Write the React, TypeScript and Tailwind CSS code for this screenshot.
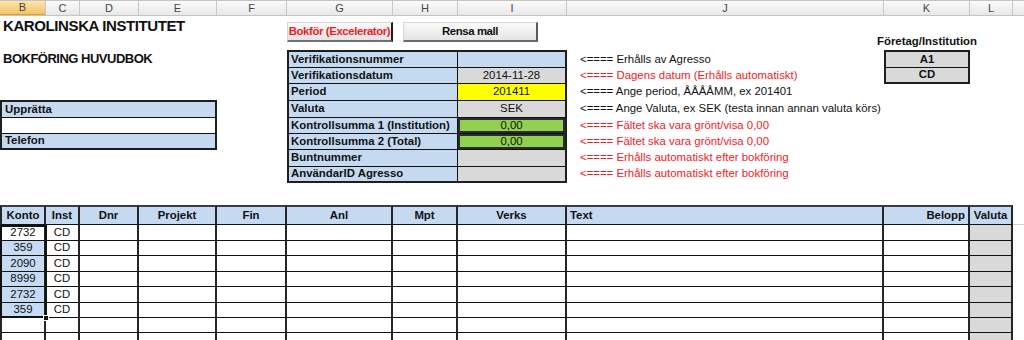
const sheetCols = [
  { letter: "B", w: "w-[46px]", active: true },
  { letter: "C", w: "w-[34px]" },
  { letter: "D", w: "w-[59px]" },
  { letter: "E", w: "w-[78px]" },
  { letter: "F", w: "w-[70px]" },
  { letter: "G", w: "w-[106px]" },
  { letter: "H", w: "w-[65px]" },
  { letter: "I", w: "w-[109px]" },
  { letter: "J", w: "w-[317px]" },
  { letter: "K", w: "w-[86px]" },
  { letter: "L", w: "w-[43px]" },
];

const formRows = [
  { label: "Verifikationsnummer", value: "", fill: "bg-[#c5d9f1]", h: "h-[16px]", note: "<==== Erhålls av Agresso", red: false },
  { label: "Verifikationsdatum", value: "2014-11-28", fill: "bg-[#d9d9d9]", h: "h-[16px]", note: "<==== Dagens datum (Erhålls automatiskt)", red: true },
  { label: "Period", value: "201411", fill: "bg-[#ffff00]", h: "h-[17px]", note: "<==== Ange period, ÅÅÅÅMM, ex 201401", red: false },
  { label: "Valuta", value: "SEK", fill: "bg-[#d9d9d9]", h: "h-[17px]", note: "<==== Ange Valuta, ex SEK (testa innan annan valuta körs)", red: false },
  { label: "Kontrollsumma 1 (Institution)", value: "0,00", fill: "bg-[#92d050] border-2 border-[#2b2b2b]", h: "h-[16px]", note: "<==== Fältet ska vara grönt/visa 0,00", red: true },
  { label: "Kontrollsumma 2 (Total)", value: "0,00", fill: "bg-[#92d050] border-2 border-[#2b2b2b]", h: "h-[16px]", note: "<==== Fältet ska vara grönt/visa 0,00", red: true },
  { label: "Buntnummer", value: "", fill: "bg-[#d9d9d9]", h: "h-[17px]", note: "<==== Erhålls automatiskt efter bokföring", red: true },
  { label: "AnvändarID Agresso", value: "", fill: "bg-[#d9d9d9]", h: "h-[14px]", note: "<==== Erhålls automatiskt efter bokföring", red: true },
];

const tableCols = [
  { name: "Konto", w: "w-[46px] border-l-2", align: "justify-center" },
  { name: "Inst", w: "w-[34px]", align: "justify-center" },
  { name: "Dnr", w: "w-[59px]", align: "justify-center" },
  { name: "Projekt", w: "w-[78px]", align: "justify-center" },
  { name: "Fin", w: "w-[70px]", align: "justify-center" },
  { name: "Anl", w: "w-[106px]", align: "justify-center" },
  { name: "Mpt", w: "w-[65px]", align: "justify-center" },
  { name: "Verks", w: "w-[109px]", align: "justify-center" },
  { name: "Text", w: "w-[317px]", align: "justify-start pl-[3px]" },
  { name: "Belopp", w: "w-[86px]", align: "justify-end pr-[3px]" },
  { name: "Valuta", w: "w-[43px]", align: "justify-center" },
];

const rows = [
  { h: "h-[16px]", konto: "2732", inst: "CD", sel: false },
  { h: "h-[15px]", konto: "359", inst: "CD", sel: true },
  { h: "h-[16px]", konto: "2090", inst: "CD", sel: true },
  { h: "h-[15px]", konto: "8999", inst: "CD", sel: true },
  { h: "h-[16px]", konto: "2732", inst: "CD", sel: true },
  { h: "h-[15px]", konto: "359", inst: "CD", sel: true },
  { h: "h-[15px]", konto: "", inst: "", sel: false },
  { h: "h-[16px]", konto: "", inst: "", sel: false },
  { h: "h-[16px]", konto: "", inst: "", sel: false },
];

const App = () => {
  return (
    <div className="w-[1024px] h-[340px] overflow-hidden bg-white text-[#111] font-['Liberation_Sans',Arial,sans-serif]">
      {/* column letters */}
      <div className="flex h-[16px] border-t border-b border-[#c4c4c4] bg-linear-to-b from-[#fbfbfb] to-[#e8e8e8]">
        {sheetCols.map((c) => (
          <div
            key={c.letter}
            className={`${c.w} flex items-center justify-center border-r border-[#c9c9c9] text-[11px] text-[#454545] ${
              c.active ? "bg-linear-to-b from-[#fde4ae] to-[#f3c462] border-b border-b-[#e39a2e]" : ""
            }`}
          >
            {c.letter}
          </div>
        ))}
        <div className="flex-1" />
      </div>

      {/* top part */}
      <div className="flex h-[189px]">
        <div className="w-[287px] flex flex-col">
          <div className="h-[19px] pl-[3px] text-[15px] leading-[19px] font-bold tracking-[-0.4px] whitespace-nowrap">
            KAROLINSKA INSTITUTET
          </div>
          <div className="mt-[16px] h-[16px] pl-[3px] text-[13px] leading-[16px] font-bold tracking-[-0.5px] whitespace-nowrap">
            BOKFÖRING HUVUDBOK
          </div>
          <div className="mt-[33px] w-[217px] border-2 border-[#1e1e1e] text-[11.4px] font-bold">
            <div className="h-[16px] flex items-center pl-[3px] bg-[#c5d9f1] border-b border-[#111]">Upprätta</div>
            <div className="h-[16px] border-b border-[#111]" />
            <div className="h-[14px] flex items-center pl-[3px] bg-[#c5d9f1]">Telefon</div>
          </div>
        </div>

        <div className="w-[280px] flex flex-col">
          <div className="mt-[6px] h-[20px] flex text-[11.4px] font-bold tracking-[-0.4px]">
            <div className="w-[106px] flex items-center justify-center bg-linear-to-b from-[#fafafa] to-[#e4e4e4] border-t border-l border-[#d6d6d6] border-r-2 border-r-[#1c1c1c] border-b-2 border-b-[#707070] text-[#ee1c25] whitespace-nowrap">
              Bokför (Excelerator)
            </div>
            <div className="ml-[10px] w-[135px] flex items-center justify-center bg-linear-to-b from-[#fafafa] to-[#e4e4e4] border-t border-l border-[#d6d6d6] border-r-2 border-r-[#5a5a5a] border-b-2 border-b-[#6a6a6a] whitespace-nowrap">
              Rensa mall
            </div>
          </div>
          <div className="mt-[8px] border-2 border-[#1e1e1e] text-[11.4px]">
            {formRows.map((r, i) => (
              <div key={r.label} className={`flex ${r.h} ${i < formRows.length - 1 ? "border-b border-[#111]" : ""}`}>
                <div className="w-[169px] flex items-center pl-[2px] bg-[#c5d9f1] border-r border-[#111] font-bold whitespace-nowrap">
                  {r.label}
                </div>
                <div className={`flex-1 flex items-center justify-center ${r.fill}`}>{r.value}</div>
              </div>
            ))}
          </div>
        </div>

        <div className="w-[317px] mt-[36px] flex flex-col text-[11.4px]">
          {formRows.map((r, i) => (
            <div
              key={i}
              className={`${r.h} flex items-center pl-[13px] whitespace-nowrap ${
                i < formRows.length - 1 ? "border-b border-transparent" : ""
              } ${r.red ? "text-[#ee1c25]" : "text-[#111]"}`}
            >
              {r.note}
            </div>
          ))}
        </div>

        <div className="w-[86px] mt-[18px] flex flex-col text-[11.4px] font-bold">
          <div className="h-[16px] flex items-center justify-center whitespace-nowrap">Företag/Institution</div>
          <div className="border-2 border-[#1e1e1e] bg-[#d9d9d9]">
            <div className="h-[16px] flex items-center justify-center border-b border-[#111]">A1</div>
            <div className="h-[14px] flex items-center justify-center">CD</div>
          </div>
        </div>
      </div>

      {/* bokföringsrader */}
      <div className="relative">
        <div className="flex h-[20px]">
          {tableCols.map((c) => (
            <div
              key={c.name}
              className={`${c.w} ${c.align} flex items-center bg-[#c5d9f1] border-t-2 border-t-[#3c3c3c] border-b border-b-[#111] border-r-2 border-[#262626] text-[11.4px] font-bold`}
            >
              {c.name}
            </div>
          ))}
          <div className="flex-1 border-b border-[#cfcfcf]" />
        </div>
        {rows.map((r, i) => (
          <div key={i} className={`flex ${r.h} text-[11.4px]`}>
            {tableCols.map((c, j) => (
              <div
                key={c.name}
                className={`${c.w} flex items-center justify-center border-r-2 border-b border-[#262626] border-b-[#111] ${
                  j === 0 && r.sel ? "bg-[#c6dbf3]" : ""
                } ${j === 10 ? "bg-[#d9d9d9]" : ""}`}
              >
                {j === 0 ? r.konto : j === 1 ? r.inst : ""}
              </div>
            ))}
          </div>
        ))}
        {/* markering B */}
        <div className="absolute left-0 top-[20px] w-[47px] h-[93px] border-2 border-[#111] pointer-events-none" />
        <div className="absolute left-[43px] top-[110px] w-[6px] h-[6px] bg-[#111] border border-white pointer-events-none" />
      </div>
    </div>
  );
};

export default App;
